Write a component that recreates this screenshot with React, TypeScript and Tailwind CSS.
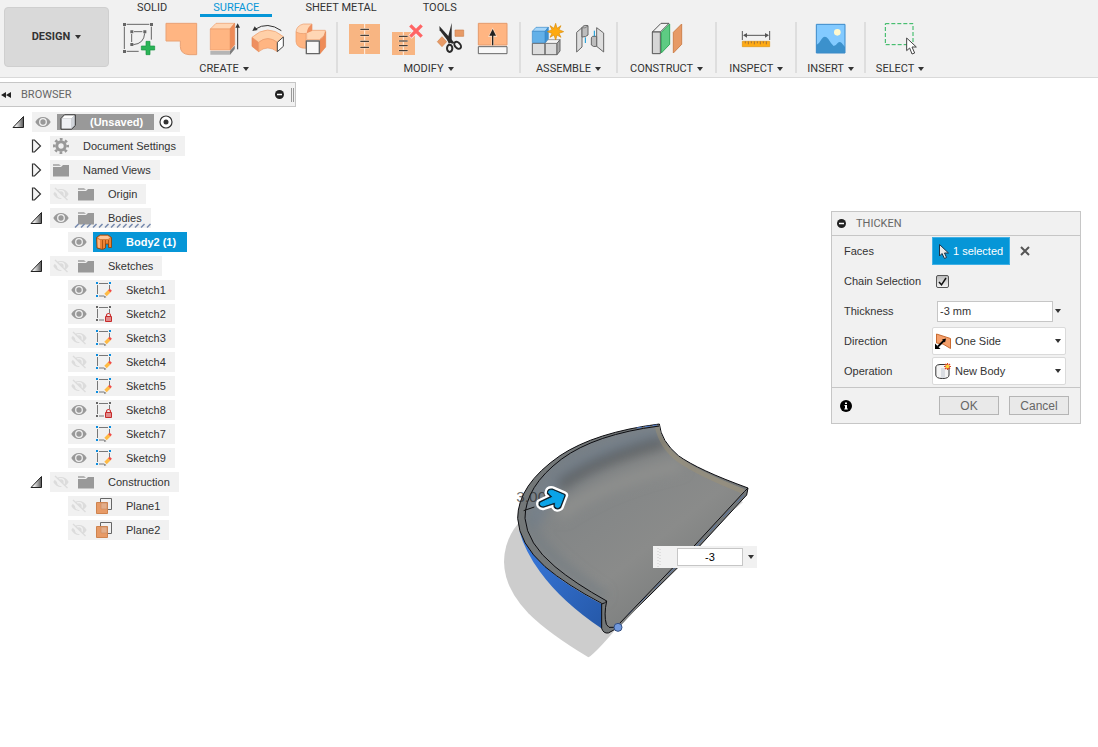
import { useState } from "react";
import type { ReactNode } from "react";

function Caret() {
  return (
    <svg viewBox="0 0 6 4" className="h-1 w-[6px] shrink-0" aria-hidden="true">
      <path d="M0 0h6L3 4z" fill="#333" />
    </svg>
  );
}

/* ---------- Toolbar icons ---------- */

function ToolIcon({ children }: { children: ReactNode }) {
  return (
    <svg viewBox="0 0 96 96" className="w-8 h-8 overflow-visible" aria-hidden="true" strokeLinejoin="round">
      {children}
    </svg>
  );
}

const icons: Record<string, ReactNode> = {
  sketch: (
    <>
      <path d="M14 4H82M7 11V78M88 11V50M14 85H50M36 26H61M29 33V57M68 31Q66 62 34 65" fill="none" stroke="#666" strokeWidth="3" />
      <path d="M3 0h9v9H3zM84 0h9v9h-9zM3 81h9v9H3zM25 22h9v9h-9zM64 22h9v9h-9zM25 60h9v9h-9z" fill="#666" />
      <path d="M72 55h12v14h14v12H84v14H72V81H58V69h14z" fill="#2bb457" stroke="#179440" strokeWidth="2" />
    </>
  ),
  patch: <path d="M3 1H95V95H72Q46 93 46 70V54H3Z" fill="#ffb582" stroke="#e9a275" strokeWidth="3" />,
  extrude: (
    <>
      <path d="M7 84H66L80 68V78L66 95H7Z" fill="#b5b5b5" />
      <path d="M66 84L80 68V78L66 95Z" fill="#7e7e7e" />
      <path d="M7 18L24 1H80L66 18Z" fill="#ffd6b4" stroke="#ec9a68" strokeWidth="2" />
      <path d="M66 18L80 1V65L66 81Z" fill="#ee8b57" stroke="#e58552" strokeWidth="2" />
      <path d="M7 18H66V81H7Z" fill="#ffb582" stroke="#ec9a68" strokeWidth="2" />
      <path d="M89 79V8" stroke="#333" strokeWidth="3" />
      <path d="M89 1L96 14H82Z" fill="#333" />
    </>
  ),
  revolve: (
    <>
      <path d="M3 43L23 58V86L3 70Z" fill="#ee8f60" stroke="#e58552" strokeWidth="2" />
      <path d="M3 43Q50 0 97 41L79 58Q50 36 23 58Z" fill="#ffd0a8" stroke="#ec9a68" strokeWidth="2" />
      <path d="M23 58Q50 36 79 58V86Q50 64 23 86Z" fill="#ffb582" stroke="#ec9a68" strokeWidth="2" />
      <path d="M79 58L97 42V70L79 86Z" fill="#fff" stroke="#444" strokeWidth="3" />
      <path d="M12 19Q50-6 91 23" fill="none" stroke="#333" strokeWidth="3" />
      <path d="M4 24L11 10L20 21Z" fill="#333" />
    </>
  ),
  loft: (
    <>
      <path d="M6 26Q16 32 36 31V76Q8 76 6 56Z" fill="#ffb582" stroke="#ec9a68" strokeWidth="2" />
      <path d="M6 26Q8 8 28 3H54V22H94Q96 38 76 50H38V31Q16 34 6 26Z" fill="#ffd6b4" stroke="#ec9a68" strokeWidth="2" />
      <path d="M54 3V24L38 31Q40 12 54 3Z" fill="#ee8f60" />
      <path d="M78 50Q94 40 95 26V72L78 92Z" fill="#ee8b57" stroke="#e58552" strokeWidth="2" />
      <path d="M37 54H76V92H37Z" fill="#f8f8f8" stroke="#666" strokeWidth="4" />
    </>
  ),
  stitch: (
    <>
      <path d="M3 3H96V93H3Z" fill="#f8b582" />
      <path d="M50 3V93" stroke="#fff3e6" strokeWidth="3" />
      <path d="M36 19H64M36 37H64M36 55H64M36 73H64" stroke="#fbd8bd" strokeWidth="7" />
      <path d="M37 19H63M37 37H63M37 55H63M37 73H63" stroke="#222" strokeWidth="3" />
    </>
  ),
  unstitch: (
    <>
      <path d="M3 27H72V96H3Z" fill="#f8b582" />
      <path d="M37 27V96" stroke="#fff3e6" strokeWidth="3" />
      <path d="M23 40H51M23 54H51M23 68H51M23 83H51" stroke="#fbd8bd" strokeWidth="6" />
      <path d="M24 40H50M24 54H50M24 68H50M24 83H50" stroke="#222" strokeWidth="3" />
      <path d="M57 6L93 42M93 6L57 42" stroke="#f1f1f1" strokeWidth="14" />
      <path d="M58 7L92 41M92 7L58 41" stroke="#ff6464" strokeWidth="10" />
    </>
  ),
  trim: (
    <>
      <path d="M63 21H89V40H63Z" fill="#e79a66" stroke="#cf834e" strokeWidth="2" />
      <path d="M10 56L24 41L38 56L24 71Z" fill="#e79a66" stroke="#cf834e" strokeWidth="2" />
      <path d="M16 9L62 60L54 62L40 52L17 22Z" fill="#2b2b2b" />
      <path d="M53 0V58L44 62L40 50Z" fill="#2b2b2b" />
      <ellipse cx="47" cy="76" rx="8" ry="11" fill="none" stroke="#2b2b2b" strokeWidth="6" />
      <ellipse cx="71" cy="67" rx="8" ry="12" transform="rotate(-42 71 67)" fill="none" stroke="#2b2b2b" strokeWidth="6" />
    </>
  ),
  offset: (
    <>
      <path d="M4 1H90V66H4Z" fill="#ffb582" stroke="#e59a6c" strokeWidth="3" />
      <path d="M47 67V34" stroke="#fbd8bd" strokeWidth="8" />
      <path d="M47 13L61 42H33Z" fill="#fbd8bd" />
      <path d="M47 67V34" stroke="#222" strokeWidth="4" />
      <path d="M47 18L57 38H37Z" fill="#222" />
      <path d="M4 71H90V92H4Z" fill="#f8f8f8" stroke="#666" strokeWidth="3" />
    </>
  ),
  assemble: (
    <>
      <path d="M4 61H42V95H4ZM42 61H78V95H42Z" fill="#dcdcdc" stroke="#666" strokeWidth="3" />
      <path d="M42 61L50 50H87L78 61Z" fill="#f5f5f5" stroke="#777" strokeWidth="2" />
      <path d="M78 61L87 50V84L78 95Z" fill="#aaa" stroke="#666" strokeWidth="3" />
      <path d="M4 25L15 13H52L42 25Z" fill="#a5d6fa" stroke="#3a8ac9" strokeWidth="2" />
      <path d="M42 25L52 13V48L42 59Z" fill="#3d92d2" stroke="#3a8ac9" strokeWidth="2" />
      <path d="M4 25H42V59H4Z" fill="#62b0e8" stroke="#3a8ac9" strokeWidth="2" />
      <path
        d="M74 1L78 16L90 8L84 20L98 26L84 31L90 43L78 36L74 51L69 36L57 43L63 31L49 26L63 20L57 8L69 16Z"
        fill="#ffaa0f"
        stroke="#d98b08"
        strokeWidth="2"
      />
    </>
  ),
  joint: (
    <>
      <path d="M8 28L24 14V72L8 87Z" fill="#dedede" stroke="#666" strokeWidth="3" />
      <path d="M24 14Q28 5 42 8V36Q36 42 24 42Z" fill="#bdbdbd" stroke="#666" strokeWidth="3" />
      <path d="M24 14Q33 18 42 9" fill="none" stroke="#666" strokeWidth="2" />
      <path d="M68 14L89 30V87L68 70Z" fill="#dedede" stroke="#666" strokeWidth="3" />
      <path d="M68 40H56Q51 42 52 48V66Q58 73 68 70Z" fill="#bdbdbd" stroke="#666" strokeWidth="3" />
      <path d="M34 43V60M61 23V40" stroke="#0696d7" strokeWidth="3" />
    </>
  ),
  construct: (
    <>
      <path d="M4 27L30 1H54L28 27Z" fill="#f3f3f3" stroke="#555" strokeWidth="3" />
      <path d="M4 27H28V92H4Z" fill="#d6d6d6" stroke="#555" strokeWidth="3" />
      <path d="M31 28L56 3V64L31 90Z" fill="#5ecb83" stroke="#31a95a" strokeWidth="3" />
      <path d="M67 28L92 3V64L67 90Z" fill="#e79a66" stroke="#cf834e" strokeWidth="3" />
    </>
  ),
  inspect: (
    <>
      <path d="M7 24V51M89 24V51M12 37H84" stroke="#555" strokeWidth="3" />
      <path d="M9 37L21 30V44ZM87 37L75 30V44Z" fill="#555" />
      <path d="M7 55H89V71H7Z" fill="#ffab14" stroke="#dd910b" strokeWidth="2" />
      <path d="M16 55V61M25 55V64M34 55V61M43 55V64M52 55V61M61 55V64M70 55V61M79 55V64" stroke="#754" strokeWidth="2" />
    </>
  ),
  insert: (
    <>
      <path d="M4 4H90V90H4Z" fill="#83caff" />
      <circle cx="67" cy="28" r="10" fill="#fff9cf" />
      <path d="M4 66Q14 60 20 48Q29 34 40 48Q48 62 56 69Q62 69 68 60Q74 54 80 60L90 72V90H4Z" fill="#3c91cc" />
      <path d="M4 4H90V90H4Z" fill="none" stroke="#3a8ac9" strokeWidth="3" />
    </>
  ),
  select: (
    <>
      <path d="M4 2H87V65H4Z" fill="none" stroke="#28b558" strokeWidth="3" strokeDasharray="12 6" />
      <path d="M68 45V83L77 75L84 93L92 90L84 72H97Z" fill="#fff" stroke="#444" strokeWidth="3" />
    </>
  ),
};

const groups = [
  { label: "CREATE", tools: ["sketch", "patch", "extrude", "revolve", "loft"] },
  { label: "MODIFY", tools: ["stitch", "unstitch", "trim", "offset"] },
  { label: "ASSEMBLE", tools: ["assemble", "joint"] },
  { label: "CONSTRUCT", tools: ["construct"], wide: true },
  { label: "INSPECT", tools: ["inspect"], wide: true },
  { label: "INSERT", tools: ["insert"] },
  { label: "SELECT", tools: ["select"] },
];

const tabs = ["SOLID", "SURFACE", "SHEET METAL", "TOOLS"];

function Toolbar() {
  const [tab, setTab] = useState("SURFACE");
  return (
    <header className="flex h-[78px] shrink-0 border-b border-[#d9d9d9] bg-[#f1f1f1] font-[Roboto,sans-serif] text-[11px] text-[#333]">
      <button className="mt-[7px] ml-1 flex h-[60px] w-[105px] shrink-0 items-center justify-center gap-[5px] rounded border border-[#cfcfcf] bg-[#d9d9d9] font-bold">
        DESIGN <Caret />
      </button>
      <div className="flex flex-col">
        <nav className="ml-[15px] flex h-[17px] gap-5">
          {tabs.map((t) => (
            <button
              key={t}
              onClick={() => setTab(t)}
              className={
                t === tab
                  ? "border-b-[3px] border-[#0696d7] px-[13px] pt-px leading-[13px] text-[#0696d7]"
                  : "border-b-[3px] border-transparent px-[13px] pt-px leading-[13px]"
              }
            >
              {t}
            </button>
          ))}
        </nav>
        <div className="mt-[5px] ml-[3px] flex h-[51px]">
          {groups.map((g) => (
            <div
              key={g.label}
              className={
                g.wide
                  ? "flex flex-col items-center border-r-2 border-[#dedede] px-3 pt-px"
                  : "flex flex-col items-center border-r-2 border-[#dedede] px-[10px] pt-px last:border-r-0"
              }
            >
              <div className="flex gap-[11px]">
                {g.tools.map((name) => (
                  <button key={name} aria-label={name}>
                    <ToolIcon>{icons[name]}</ToolIcon>
                  </button>
                ))}
              </div>
              <button className="mt-2 flex items-center gap-1 leading-3">
                {g.label} <Caret />
              </button>
            </div>
          ))}
        </div>
      </div>
    </header>
  );
}

/* ---------- Browser tree ---------- */

function SmallIcon({ children }: { children: ReactNode }) {
  return (
    <svg viewBox="0 0 16 16" className="h-4 w-4 shrink-0" aria-hidden="true">
      {children}
    </svg>
  );
}

function Eye({ on }: { on: boolean }) {
  return (
    <SmallIcon>
      <path d="M0.3 8Q3 3 8 3t7.7 5Q13 13 8 13T0.3 8z" fill={on ? "#999" : "#dcdcdc"} />
      <circle cx="8" cy="8" r="3.3" fill="none" stroke="#f1f1f1" strokeWidth="1.3" />
      {!on && (
        <>
          <path d="M1 3L13 15" stroke="#f1f1f1" strokeWidth="3" />
          <path d="M2 2L14.5 14" stroke="#dcdcdc" strokeWidth="1.3" />
        </>
      )}
    </SmallIcon>
  );
}

const nodeIcons: Record<string, ReactNode> = {
  component: (
    <>
      <path d="M1 4.5L4.5 0.8H15.3L11.5 4.5z" fill="#fff" />
      <path d="M11.5 4.5L15.3 0.8V11.5L11.5 15.2z" fill="#d0d4da" />
      <path d="M1 4.5H11.5V15.2H1z" fill="#eef0f4" />
      <path d="M1 4.5L4.5 0.8H15.3V11.5L11.5 15.2H1z" fill="none" stroke="#333" />
    </>
  ),
  gear: (
    <>
      <circle cx="8" cy="8" r="4.2" fill="none" stroke="#999" strokeWidth="3" />
      <circle cx="8" cy="8" r="6.7" fill="none" stroke="#999" strokeWidth="2.6" strokeDasharray="2.7 2.562" strokeDashoffset="1.35" />
    </>
  ),
  folder: (
    <>
      <path d="M0 2H6L8 4H0z" fill="#b4b4b4" />
      <path d="M0 5H8L10 3H16V14.5H0z" fill="#999" />
    </>
  ),
  body: (
    <>
      <path d="M0.5 3.5L4 1H12L15.5 3.5V13.5H12.5V10H9.5V14L6.5 15.5L1 14z" fill="#ef8436" stroke="#8d3c00" strokeWidth="0.8" />
      <path d="M1.5 5L4 6V14L1.8 13.5z" fill="#ffb680" />
      <path d="M1.2 3.7L4.2 1.5H11.8L14.8 3.7L12 5.5H4z" fill="#ffc596" stroke="#b0561a" strokeWidth="0.5" />
      <path d="M6.5 6V15M9.5 6V10M12.500 6V10" fill="none" stroke="#a04a0c" strokeWidth="0.8" />
    </>
  ),
  sketch: (
    <>
      <path d="M3 1.5H12M1.5 3V12M13.5 3V8M3 14H8" fill="none" stroke="#777" />
      <path d="M0 0h2v2H0zM13 0h2v2h-2zM0 13h2v2H0z" fill="#0b8de0" />
      <path d="M9.5 13L14 8.5" stroke="#ffbb45" strokeWidth="3.4" />
      <path d="M13.3 9.3L14.8 7.8" stroke="#f04a4a" strokeWidth="3" />
      <path d="M8 15.8L8.5 13.5L10.3 15.2z" fill="#666" />
    </>
  ),
  locked: (
    <>
      <path d="M3 1.5H12M1.5 3V12M13.5 3V7M3 14H8" fill="none" stroke="#777" />
      <path d="M0 0h2v2H0zM13 0h2v2h-2zM0 13h2v2H0z" fill="#666" />
      <path d="M10.5 10V9.5a2 2 0 0 1 4 0V10" fill="none" stroke="#c33" strokeWidth="1.2" />
      <path d="M9.5 10.5H15.5V15.5H9.5z" fill="#e28a8a" stroke="#c62a2a" />
    </>
  ),
  plane: (
    <>
      <path d="M4.5 4V0.5H15.5V11.5H12" fill="none" stroke="#666" />
      <path d="M0.5 4.5H11.5V15.5H0.5z" fill="#e79a66" stroke="#cf834e" />
      <path d="M5 5H11V11H5z" fill="#e3ae8a" stroke="#c98b62" strokeWidth="0.6" />
    </>
  ),
};

type Node = {
  label: string;
  icon: string;
  level: 0 | 1 | 2;
  eye?: boolean;
  open?: boolean;
};

const nodes: Node[] = [
  { label: "(Unsaved)", icon: "component", level: 0, eye: true, open: true },
  { label: "Document Settings", icon: "gear", level: 1, open: false },
  { label: "Named Views", icon: "folder", level: 1, open: false },
  { label: "Origin", icon: "folder", level: 1, eye: false, open: false },
  { label: "Bodies", icon: "folder", level: 1, eye: true, open: true },
  { label: "Body2 (1)", icon: "body", level: 2, eye: true },
  { label: "Sketches", icon: "folder", level: 1, eye: false, open: true },
  { label: "Sketch1", icon: "sketch", level: 2, eye: true },
  { label: "Sketch2", icon: "locked", level: 2, eye: true },
  { label: "Sketch3", icon: "sketch", level: 2, eye: false },
  { label: "Sketch4", icon: "sketch", level: 2, eye: false },
  { label: "Sketch5", icon: "sketch", level: 2, eye: false },
  { label: "Sketch8", icon: "locked", level: 2, eye: true },
  { label: "Sketch7", icon: "sketch", level: 2, eye: true },
  { label: "Sketch9", icon: "sketch", level: 2, eye: true },
  { label: "Construction", icon: "folder", level: 1, eye: false, open: true },
  { label: "Plane1", icon: "plane", level: 2, eye: false },
  { label: "Plane2", icon: "plane", level: 2, eye: false },
];

const indent = ["pl-3", "pl-[30px]", "pl-12"];

function Toggle({ open }: { open?: boolean }) {
  if (open === undefined) return <span className="w-3" />;
  return (
    <button className="w-3" aria-label={open ? "Collapse" : "Expand"}>
      <svg viewBox="0 0 12 14" className="h-[14px] w-3" aria-hidden="true">
        <defs>
          <linearGradient id="tri" x1="0" x2="1">
            <stop offset="0.3" stopColor="#eee" />
            <stop offset="1" stopColor="#555" />
          </linearGradient>
        </defs>
        {open ? (
          <path d="M1 12.5L11.5 1.5V12.5z" fill="url(#tri)" stroke="#222" />
        ) : (
          <path d="M2.5 1H4.5L10.5 7L4.5 13H2.5z" fill="#f4f4f4" stroke="#333" strokeWidth="1.2" />
        )}
      </svg>
    </button>
  );
}

function TreeRow({ node }: { node: Node }) {
  const root = node.level === 0;
  const selected = node.icon === "body";
  let label = "flex h-full items-center pl-[3px] pr-[9px]";
  if (root) label = "flex h-4 items-center bg-[#999] pl-[3px] pr-[11px] font-bold text-white";
  if (selected) label = "flex h-full items-center bg-[#0696d7] pl-[3px] pr-[11px] font-bold text-white";
  return (
    <li className={`flex h-5 items-center gap-2 ${indent[node.level]}`}>
      <Toggle open={node.open} />
      <div className="relative flex h-full items-center bg-[#f1f1f1]">
        {node.eye !== undefined && (
          <button className="w-[25px] pl-[3px]" aria-label="Toggle visibility">
            <Eye on={node.eye} />
          </button>
        )}
        <div className={label}>
          <SmallIcon>{nodeIcons[node.icon]}</SmallIcon>
          <span className="pl-[14px] whitespace-nowrap">{node.label}</span>
        </div>
        {root && (
          <button className="pr-[7px] pl-[5px]" aria-label="Activate component">
            <svg viewBox="0 0 14 14" className="h-[14px] w-[14px]" aria-hidden="true">
              <circle cx="7" cy="7" r="6" fill="#fff" stroke="#333" strokeWidth="1.2" />
              <circle cx="7" cy="7" r="2.5" fill="#333" />
            </svg>
          </button>
        )}
        {node.label === "Bodies" && (
          <svg viewBox="0 0 77 5" className="absolute right-0 bottom-0 h-[5px] w-[77px]" aria-hidden="true">
            {Array.from({ length: 13 }, (_, i) => (
              <path key={i} d={`M${i * 6 + 1} 4.5l3.5-3.5`} stroke="#7488ad" strokeWidth="1.5" />
            ))}
          </svg>
        )}
      </div>
    </li>
  );
}

function Minus() {
  return (
    <svg viewBox="0 0 9 9" className="h-[9px] w-[9px]" aria-hidden="true">
      <circle cx="4.5" cy="4.5" r="4.5" fill="#222" />
      <path d="M2 4.5H7" stroke="#fff" strokeWidth="1.5" />
    </svg>
  );
}

function Browser() {
  return (
    <aside className="w-[296px] shrink-0 pt-1">
      <div className="flex h-[25px] items-center border border-l-0 border-[#c6c6c6] bg-[#f1f1f1] pr-px font-[Roboto,sans-serif] text-[#666]">
        <button aria-label="Hide browser" className="ml-px w-5">
          <svg viewBox="0 0 10 6" className="h-[6px] w-[10px]" aria-hidden="true">
            <path d="M5 0V6L0 3zM10 0V6L5 3z" fill="#222" />
          </svg>
        </button>
        <h2 className="flex-1 pt-px">BROWSER</h2>
        <button aria-label="Collapse all">
          <Minus />
        </button>
        <div className="ml-[7px] h-[14px] w-[3px] border-x border-[#999]" />
      </div>
      <ul className="mt-[5px] flex flex-col gap-1">
        {nodes.map((n) => (
          <TreeRow key={n.label} node={n} />
        ))}
      </ul>
    </aside>
  );
}

/* ---------- 3D model ---------- */

const arrow =
  "M136 264L174 246L161 234Q160 224 172 226L207 241L194 275Q186 281 181 274L181 261L144 273Q134 272 136 264Z";

function Model() {
  return (
    <svg viewBox="0 0 810 750" className="absolute top-[337px] left-[495px] h-[250px] w-[270px]" aria-label="Thickened surface body">
      <defs>
        <linearGradient id="steel" x1="0.1" y1="0.2" x2="0.7" y2="0.9">
          <stop offset="0" stopColor="#707a83" />
          <stop offset="0.25" stopColor="#828586" />
          <stop offset="0.6" stopColor="#8a8b8a" />
          <stop offset="1" stopColor="#747777" />
        </linearGradient>
        <linearGradient id="blue" x1="0" y1="0" x2="1" y2="1">
          <stop offset="0" stopColor="#3a7be0" />
          <stop offset="1" stopColor="#2558a8" />
        </linearGradient>
        <clipPath id="inside">
          <path d="M493 30Q300 58 200 132Q90 215 90 310Q96 385 180 455Q240 505 335 558Q326 600 340 640H370L755 225Q600 165 545 120Q495 75 493 30Z" />
        </clipPath>
        <filter id="soft" x="-20%" y="-20%" width="140%" height="140%">
          <feGaussianBlur stdDeviation="18" />
        </filter>
        <filter id="edge">
          <feGaussianBlur stdDeviation="2" />
        </filter>
      </defs>

      <path d="M70 325Q28 375 27 440Q28 520 100 595Q160 655 280 727Q300 715 356 650L320 560Z" fill="#cdcdcd" filter="url(#edge)" />
      <path d="M720 282L744 262L735 256Z" fill="#ddd" />
      <path d="M72 345Q110 430 200 495Q250 530 322 568V642Q200 560 135 470Q90 410 72 345Z" fill="url(#blue)" />
      <path
        d="M493 27Q300 52 195 122Q68 210 68 310Q72 385 150 455Q215 510 320 565V640Q325 656 340 654L362 642L540 466L612 395L755 240L759 219Q610 165 550 122Q498 78 493 27Z"
        fill="#737778"
        stroke="#0c0c10"
        strokeWidth="3"
      />
      <g clipPath="url(#inside)">
        <path d="M0 0H810V750H0Z" fill="url(#steel)" />
        <g filter="url(#soft)" fill="none">
          <path d="M120 330Q130 200 300 120Q400 70 500 50" stroke="#74808b" strokeWidth="36" />
          <path d="M190 215Q290 135 510 80" stroke="#5c5f61" strokeWidth="30" />
          <path d="M190 300Q330 200 560 150" stroke="#8f908e" strokeWidth="36" />
          <path d="M95 300Q110 400 330 545" stroke="#727b82" strokeWidth="22" />
        </g>
        <path d="M488 35Q500 92 550 132Q610 175 745 228" fill="none" stroke="#a39370" strokeWidth="17" opacity="0.4" />
      </g>
      <path d="M425 39L486 30" stroke="#4f79c4" strokeWidth="3" strokeDasharray="16 8" fill="none" />
      <path d="M746 240L605 393L534 464L400 598" stroke="#5472a4" strokeWidth="3" strokeDasharray="30 30" fill="none" />
      <path
        d="M493 33Q300 58 200 132Q90 215 90 310Q96 385 180 455Q240 505 335 558Q330 565 320 567M335 558Q326 600 334 628L342 637H362M373 626L528 464L600 390L748 230L759 219"
        fill="none"
        stroke="#0c0c10"
        strokeWidth="3"
      />
      <circle cx="369" cy="637" r="12" fill="#7299dc" stroke="#334f82" strokeWidth="3" />

      <text x="64" y="261" fontSize="46" fill="#2a2a2a" fillOpacity="0.7" className="font-['Liberation_Sans',sans-serif]">
        3.00
      </text>
      <path d="M86 287L118 276" stroke="#111" strokeWidth="3" />
      <g strokeLinejoin="round">
        <path d={arrow} fill="#fff" stroke="#fff" strokeWidth="25" />
        <path d={arrow} fill="#0aa4e8" stroke="#10222c" strokeWidth="11" />
        <path d={arrow} fill="#0aa4e8" stroke="#0aa4e8" strokeWidth="3" />
      </g>
    </svg>
  );
}

function ValueBox() {
  return (
    <div className="absolute top-[468px] left-[653px] flex h-[22px] w-[104px] items-center bg-[#f1f1f1]">
      <svg viewBox="0 0 4 20" className="ml-1 h-5 w-1" aria-hidden="true">
        <path d="M1 1V20M3 2V20" stroke="#ccc" strokeDasharray="1 2" />
      </svg>
      <input
        aria-label="Thickness value"
        defaultValue="-3"
        className="ml-4 h-[18px] w-[66px] border border-[#c6c6c6] bg-white pb-px text-center text-[11px] text-black outline-none"
      />
      <button aria-label="Value options" className="ml-[5px]">
        <Caret />
      </button>
    </div>
  );
}

/* ---------- Thicken dialog ---------- */

function Field({ id, label, children }: { id: string; label: string; children: ReactNode }) {
  return (
    <div className="flex h-[30px] items-center pl-3">
      <label htmlFor={id} className="w-[88px] shrink-0">
        {label}
      </label>
      {children}
    </div>
  );
}

function IconSelect({ id, value, icon }: { id: string; value: string; icon: ReactNode }) {
  return (
    <div className="relative h-7 w-[134px]">
      <select
        id={id}
        defaultValue={value}
        className="h-full w-full appearance-none rounded-xs border border-[#dadada] bg-white pl-[22px] outline-none"
      >
        <option>{value}</option>
      </select>
      <span className="pointer-events-none absolute inset-0 flex items-center justify-between pr-[5px] pl-[3px]">
        <SmallIcon>{icon}</SmallIcon>
        <Caret />
      </span>
    </div>
  );
}

function ThickenDialog() {
  return (
    <section
      aria-label="Thicken"
      className="relative mt-[133px] mr-[17px] w-[250px] shrink-0 self-start border border-[#c6c6c6] bg-[#f1f1f1]"
    >
      <div className="flex h-6 items-center gap-[10px] border-b border-[#c6c6c6] pl-[5px] font-[Roboto,sans-serif] text-[#666]">
        <button aria-label="Collapse dialog">
          <Minus />
        </button>
        <h2 className="pt-px">THICKEN</h2>
      </div>
      <form onSubmit={(e) => e.preventDefault()}>
        <Field id="faces" label="Faces">
          <button
            id="faces"
            type="button"
            className="flex h-7 w-[78px] items-center gap-1 border border-[#3fb0e6] bg-[#0696d7] pl-[6px] whitespace-nowrap text-white"
          >
            <svg viewBox="0 0 10 15" className="h-[15px] w-[10px] shrink-0" aria-hidden="true">
              <path d="M0.5 0.5V12L3 9.5L5.5 14.5L7.5 13.5L5.5 9H9.5z" fill="#e8e8e8" stroke="#234" />
            </svg>
            1 selected
          </button>
          <button type="button" aria-label="Clear selection" className="ml-[10px]">
            <svg viewBox="0 0 10 10" className="h-[10px] w-[10px]" aria-hidden="true">
              <path d="M1 1L9 9M9 1L1 9" stroke="#555" strokeWidth="2" />
            </svg>
          </button>
        </Field>
        <Field id="chain" label="Chain Selection">
          <span className="relative ml-1 h-[13px] w-[13px]">
            <input
              id="chain"
              type="checkbox"
              defaultChecked
              className="peer block h-[13px] w-[13px] appearance-none rounded-xs border border-[#555] bg-linear-to-b from-[#bbb] to-[#f4f4f4]"
            />
            <svg viewBox="0 0 13 13" className="pointer-events-none absolute inset-0 hidden peer-checked:block" aria-hidden="true">
              <path d="M3 7L5.5 9.8L10 3" fill="none" stroke="#111" strokeWidth="1.5" />
            </svg>
          </span>
        </Field>
        <Field id="thickness" label="Thickness">
          <input
            id="thickness"
            defaultValue="-3 mm"
            className="ml-[5px] h-[21px] w-[116px] border border-[#c6c6c6] bg-white px-[2px] outline-none"
          />
          <button type="button" aria-label="Thickness options" className="ml-[2px]">
            <Caret />
          </button>
        </Field>
        <Field id="direction" label="Direction">
          <IconSelect
            id="direction"
            value="One Side"
            icon={
              <>
                <path d="M1.5 1L15.5 5.5V15.5L8 11L1.5 10z" fill="#f4a06c" stroke="#c86a30" />
                <path d="M3 13.5L9 7.5" stroke="#000" strokeWidth="1.8" />
                <path d="M0 16V10.5L5.5 16zM11 5.5L7 6.5L10 9.5z" fill="#000" />
              </>
            }
          />
        </Field>
        <Field id="operation" label="Operation">
          <IconSelect
            id="operation"
            value="New Body"
            icon={
              <>
                <path d="M0.8 3.5Q2 1.5 5 1.5H10Q14 1.5 14 4V12Q14 15.5 7.5 15.5T0.8 12z" fill="#f4f4f4" stroke="#333" />
                <path d="M6 5H10V15H6z" fill="#dadde2" />
                <path d="M12.5 0v7M9 3.5h7M10 1l5 5M15 1l-5 5" stroke="#e0471c" strokeWidth="1.2" />
                <circle cx="12.5" cy="3.5" r="1.8" fill="#ffd83a" />
              </>
            }
          />
        </Field>
        <div className="mt-px flex h-9 items-center border-t border-[#c6c6c6] pl-2 text-xs">
          <button type="button" aria-label="Information" className="flex-1">
            <svg viewBox="0 0 12 12" className="h-3 w-3" aria-hidden="true">
              <circle cx="6" cy="6" r="6" fill="#000" />
              <path d="M5 2.5H7V4H5zM4.5 5H7V8.5H7.8V9.5H4.3V8.5H5V6H4.5z" fill="#fff" />
            </svg>
          </button>
          <div className="flex gap-[10px] pr-[11px] text-[#666]">
            <button type="submit" className="h-[19px] w-[60px] border border-[#b5b5b5] bg-[#e9e9e9] leading-none">
              OK
            </button>
            <button type="button" className="h-[19px] w-[60px] border border-[#b5b5b5] bg-[#e9e9e9] leading-none">
              Cancel
            </button>
          </div>
        </div>
      </form>
    </section>
  );
}

export default function App() {
  return (
    <div className="flex min-h-screen flex-col overflow-hidden bg-white font-['Liberation_Sans',Arial,sans-serif] text-[11px] text-[#333]">
      <Toolbar />
      <main className="relative flex flex-1 justify-between">
        <Browser />
        <Model />
        <ValueBox />
        <ThickenDialog />
      </main>
    </div>
  );
}
